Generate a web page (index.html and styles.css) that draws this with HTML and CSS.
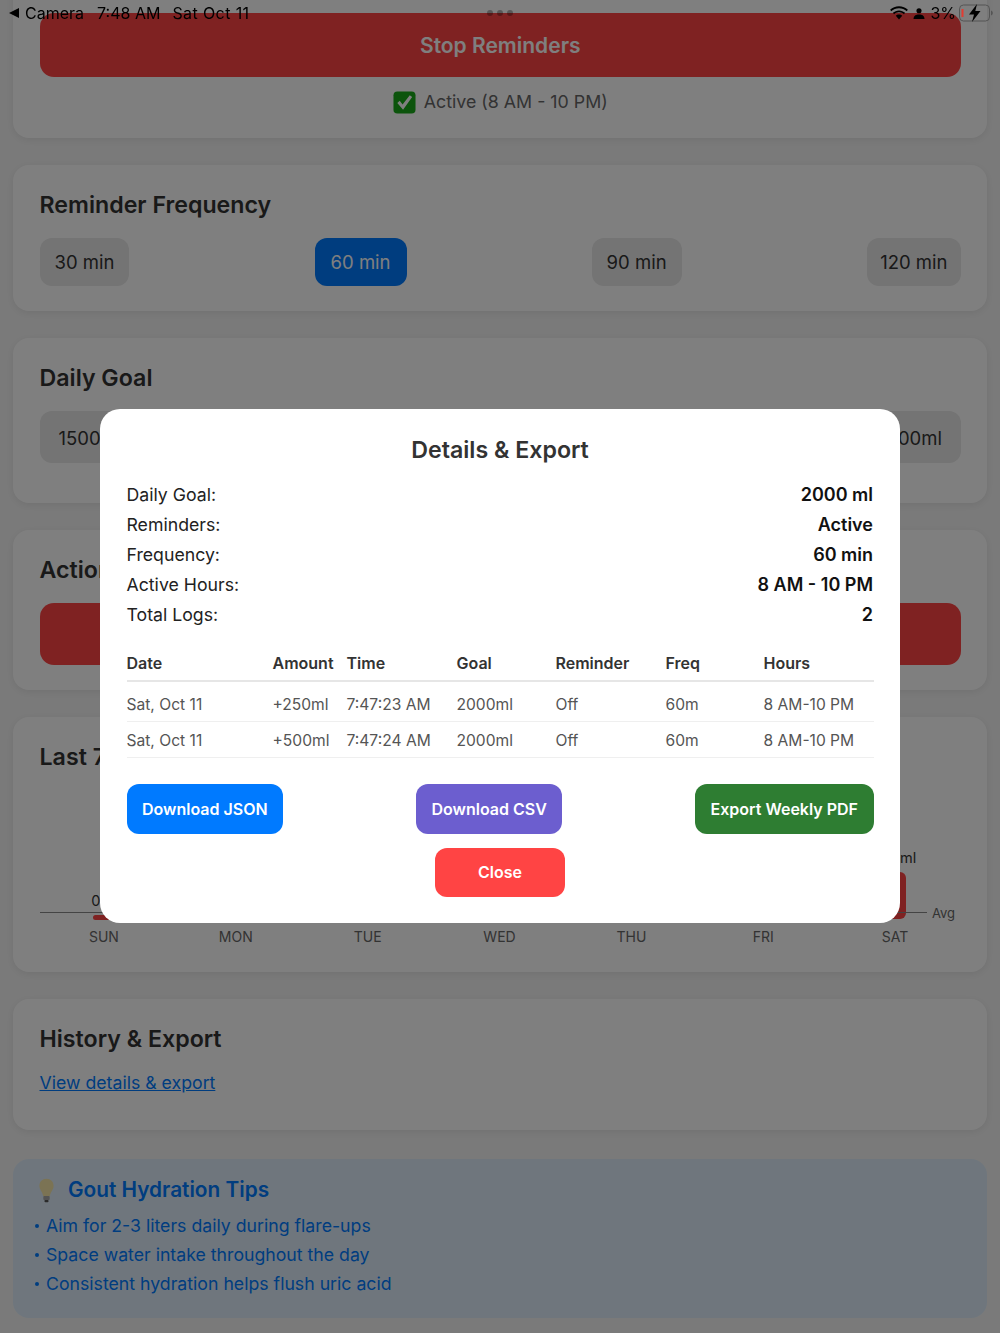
FILE: index.html
```html
<!DOCTYPE html>
<html lang="en">
<head>
<meta charset="utf-8">
<title>Hydration Reminders</title>
<link rel="stylesheet" href="styles.css">
</head>
<body>
<main class="page">
  <section class="card card-status">
    <button class="primary-btn stop-btn">Stop Reminders</button>
    <p class="status">
      <svg class="check" viewBox="0 0 24 24"><rect x="0.5" y="0.5" width="23" height="23" rx="4" fill="#18a818"/><path d="M4.500 12.500l2.500-2.200 3 3.700L17.500 4.500l2.500 1.800L10.500 19.500z" fill="#fff"/></svg>
      <span>Active (8 AM - 10 PM)</span>
    </p>
  </section>

  <section class="card card-freq">
    <h2>Reminder Frequency</h2>
    <div class="options">
      <button class="opt">30 min</button>
      <button class="opt opt-active">60 min</button>
      <button class="opt">90 min</button>
      <button class="opt opt-narrow">120 min</button>
    </div>
  </section>

  <section class="card card-goal">
    <h2>Daily Goal</h2>
    <div class="options">
      <button class="opt opt-tall">1500ml</button>
      <button class="opt opt-tall">2000ml</button>
      <button class="opt opt-tall">2500ml</button>
      <button class="opt opt-tall">3000ml</button>
    </div>
  </section>

  <section class="card card-actions">
    <h2>Actions</h2>
    <div class="primary-btn action-btn"></div>
  </section>

  <section class="card card-chart">
    <h2>Last 7 Days</h2>
    <div class="chart">
      <div class="avg-line"></div>
      <span class="avg-label">Avg</span>
      <div class="col"><span class="col-val">0ml</span><div class="bar bar-min"></div><span class="col-day">SUN</span></div>
      <div class="col"><div class="bar bar-none"></div><span class="col-day">MON</span></div>
      <div class="col"><div class="bar bar-none"></div><span class="col-day">TUE</span></div>
      <div class="col"><div class="bar bar-none"></div><span class="col-day">WED</span></div>
      <div class="col"><div class="bar bar-none"></div><span class="col-day">THU</span></div>
      <div class="col"><div class="bar bar-none"></div><span class="col-day">FRI</span></div>
      <div class="col"><span class="col-val">750ml</span><div class="bar bar-sat"></div><span class="col-day">SAT</span></div>
    </div>
  </section>

  <section class="card card-history">
    <h2>History &amp; Export</h2>
    <a class="link" href="#">View details &amp; export</a>
  </section>

  <section class="tips">
    <h3 class="tips-title">
      <svg class="bulb" viewBox="0 0 20 30"><path d="M10 1C5 1 1.500 4.800 1.500 9.500c0 4.400 3.400 6.600 4.600 12h7.800c1.200-5.400 4.600-7.600 4.600-12C18.500 4.800 15 1 10 1z" fill="#f6e6a8"/><rect x="6.200" y="21.500" width="7.600" height="5" rx="1" fill="#a9a9a9"/><rect x="7.500" y="26.500" width="5" height="2.500" rx="1" fill="#555"/></svg>
      <span>Gout Hydration Tips</span>
    </h3>
    <ul class="tips-list">
      <li>Aim for 2-3 liters daily during flare-ups</li>
      <li>Space water intake throughout the day</li>
      <li>Consistent hydration helps flush uric acid</li>
    </ul>
  </section>
</main>

<div class="scrim">
  <div class="modal">
    <h2 class="modal-title">Details &amp; Export</h2>
    <dl class="summary">
      <div class="summary-row"><dt>Daily Goal:</dt><dd>2000 ml</dd></div>
      <div class="summary-row"><dt>Reminders:</dt><dd>Active</dd></div>
      <div class="summary-row"><dt>Frequency:</dt><dd>60 min</dd></div>
      <div class="summary-row"><dt>Active Hours:</dt><dd>8 AM - 10 PM</dd></div>
      <div class="summary-row"><dt>Total Logs:</dt><dd>2</dd></div>
    </dl>
    <table class="logs">
      <colgroup>
        <col class="c-date"><col class="c-amount"><col class="c-time"><col class="c-goal"><col class="c-rem"><col class="c-freq"><col class="c-hours">
      </colgroup>
      <thead>
        <tr><th>Date</th><th>Amount</th><th>Time</th><th>Goal</th><th>Reminder</th><th>Freq</th><th>Hours</th></tr>
      </thead>
      <tbody>
        <tr><td>Sat, Oct 11</td><td>+250ml</td><td>7:47:23 AM</td><td>2000ml</td><td>Off</td><td>60m</td><td>8 AM-10 PM</td></tr>
        <tr><td>Sat, Oct 11</td><td>+500ml</td><td>7:47:24 AM</td><td>2000ml</td><td>Off</td><td>60m</td><td>8 AM-10 PM</td></tr>
      </tbody>
    </table>
    <div class="export-row">
      <button class="mbtn mbtn-json">Download JSON</button>
      <button class="mbtn mbtn-csv">Download CSV</button>
      <button class="mbtn mbtn-pdf">Export Weekly PDF</button>
    </div>
    <div class="close-row">
      <button class="mbtn mbtn-close">Close</button>
    </div>
  </div>
</div>

<div class="statusbar">
  <div class="sb-left">
    <svg class="sb-back" viewBox="0 0 10 10"><path d="M10 0v10L0 5z" fill="#000"/></svg>
    <span>Camera</span>
    <span class="sb-gap">7:48 AM</span>
    <span class="sb-gap sb-gap-date">Sat Oct 11</span>
  </div>
  <div class="sb-dots"><i></i><i></i><i></i></div>
  <div class="sb-right">
    <svg class="sb-wifi" viewBox="0 0 18 14"><path d="M9 2.200c3 0 5.700 1.100 7.700 3l1.200-1.400C15.500 1.500 12.400.2 9 .2S2.500 1.500.1 3.800l1.200 1.400c2-1.900 4.700-3 7.700-3z" fill="#000"/><path d="M9 6.300c1.900 0 3.600.7 4.900 1.900l1.200-1.400C13.500 5.300 11.400 4.400 9 4.400s-4.500.9-6.100 2.400l1.200 1.400C5.400 7 7.100 6.300 9 6.300z" fill="#000"/><path d="M9 8.500c-1.300 0-2.400.5-3.200 1.200L9 13.500l3.200-3.800C11.400 9 10.300 8.500 9 8.500z" fill="#000"/></svg>
    <svg class="sb-person" viewBox="0 0 12 12"><circle cx="6" cy="3" r="2.800" fill="#000"/><path d="M0 12c0-3.500 2.500-5 6-5s6 1.500 6 5z" fill="#000"/></svg>
    <span>3%</span>
    <svg class="sb-batt" viewBox="0 0 34 18"><rect x="0.500" y="1" width="30" height="16" rx="4" fill="none" stroke="#555" stroke-width="1"/><rect x="2.500" y="5" width="2" height="8" fill="#e33b30"/><path d="M32 6.500c1.200.4 1.800 1.300 1.800 2.500s-.6 2.100-1.800 2.500z" fill="#555"/><path d="M18 0L10 10.500h5L13 18l8.500-11h-5.200z" fill="#000"/></svg>
  </div>
</div>
</body>
</html>
```

FILE: styles.css
```css
* { box-sizing: border-box; }

html, body {
  margin: 0;
  padding: 0;
  height: 1333px;
  overflow: hidden;
  background: #f5f5f5;
  font-family: Inter, "Noto Sans", "Liberation Sans", sans-serif;
  color: #333;
}

.page {
  display: flex;
  flex-direction: column;
  margin-top: -30px;
  padding: 0 13px;
}

.card {
  background: #fff;
  border-radius: 16px;
  padding: 26px 26px 26px 26.500px;
  margin-bottom: 27px;
  box-shadow: 0 2px 8px rgba(0, 0, 0, 0.08);
}

.card h2 {
  margin: 0 0 18px;
  font-size: 23.200px;
  line-height: 29px;
  font-weight: 600;
  color: #333;
}

.card-status { height: 168px; padding-top: 43px; }

.primary-btn {
  display: block;
  width: 100%;
  border: 0;
  border-radius: 14px;
  background: #ff4444;
  color: #fff;
  font: 600 21px/24px Inter, "Liberation Sans", sans-serif;
}

.stop-btn { height: 64px; padding-top: 2px; }
.action-btn { height: 62px; }

.status {
  margin: 13px 0 0;
  display: flex;
  justify-content: center;
  align-items: center;
  gap: 8px;
  font-size: 17.800px;
  line-height: 24px;
  color: #666;
}

.check { width: 23px; height: 23px; display: block; }

.options {
  display: flex;
  justify-content: space-between;
  margin-top: 1px;
}

.opt {
  height: 48px;
  padding: 0 15px;
  border: 0;
  border-radius: 12px;
  background: #e8e8e8;
  color: #333;
  font: 400 18.500px/24px Inter, "Liberation Sans", sans-serif;
}

.opt-narrow { padding: 0 13.500px; }
.opt-tall { height: 52px; padding: 1px 19px 0; }
.opt-active { background: #007aff; color: #fff; padding: 0 16px; }

.card-freq { height: 146px; }
.card-goal { height: 165px; }
.card-actions { height: 160px; }
.card-chart { height: 255px; }
.card-history { height: 131px; margin-bottom: 29px; }

.chart {
  position: relative;
  display: flex;
  align-items: flex-end;
  margin: 0 0 0 -1.500px;
  height: 155px;
}

.col {
  flex: 1 1 0;
  display: flex;
  flex-direction: column;
  align-items: center;
}

.col-val {
  font-size: 14.500px;
  line-height: 17px;
  color: #333;
  margin-bottom: 6px;
}

.bar {
  width: 21px;
  background: #ff4444;
  border-radius: 6px;
}

.bar-none { height: 0; }
.bar-min { height: 5px; margin-bottom: -1px; }
.bar-sat { height: 47px; }

.col-day {
  margin-top: 9px;
  font-size: 14px;
  line-height: 17px;
  color: #666;
}

.avg-line {
  position: absolute;
  left: 1.500px;
  right: 34px;
  top: 122px;
  border-top: 1px solid #888;
}

.avg-label {
  position: absolute;
  right: 6px;
  top: 115px;
  font-size: 13px;
  line-height: 16px;
  color: #666;
}

.link {
  display: block;
  margin-top: -1px;
  font-size: 17.700px;
  line-height: 24px;
  color: #007aff;
}

.tips {
  height: 159px;
  padding: 17px 21px 0 25px;
  border-radius: 16px;
  background: #deedfb;
}

.tips-title {
  display: flex;
  align-items: center;
  gap: 13px;
  margin: 0 0 7px;
  font-size: 20.800px;
  line-height: 28px;
  font-weight: 600;
  color: #007aff;
}

.bulb { width: 17px; height: 25px; display: block; }

.tips-list {
  list-style: none;
  margin: 0 0 0 -3px;
  padding: 0;
  color: #007aff;
  font-size: 17.700px;
  line-height: 29px;
}

.tips-list li {
  display: flex;
  align-items: center;
}

.tips-list li::before {
  content: "";
  width: 4px;
  height: 4px;
  border-radius: 50%;
  background: currentColor;
  margin-right: 7px;
  flex: none;
}

.scrim {
  position: fixed;
  inset: 0;
  background: rgba(0, 0, 0, 0.5);
  display: flex;
  align-items: center;
  justify-content: center;
}

.modal {
  width: 800px;
  height: 514px;
  margin-bottom: 1px;
  padding: 26px 26.500px;
  border-radius: 20px;
  background: #fff;
}

.modal-title {
  margin: 0 0 15px;
  text-align: center;
  font-size: 23.200px;
  line-height: 30px;
  font-weight: 600;
  color: #333;
}

.summary { margin: 0 0 23px; }

.summary-row {
  display: flex;
  justify-content: space-between;
  font-size: 17.700px;
  line-height: 30px;
  color: #222;
}

.summary-row dt { font-weight: 400; }
.summary-row dd { margin: 0 0.500px 0 0; font-size: 18px; font-weight: 600; color: #111; }

.logs {
  width: 100%;
  table-layout: fixed;
  border-collapse: collapse;
  font-size: 15.600px;
}

.c-date { width: 146px; }
.c-amount { width: 74px; }
.c-time { width: 110px; }
.c-goal { width: 99px; }
.c-rem { width: 110px; }
.c-freq { width: 98px; }

.logs th {
  padding: 0 0 7px;
  text-align: left;
  font-size: 16px;
  font-weight: 600;
  color: #333;
  line-height: 20px;
  border-bottom: 2px solid #e6e6e6;
}

.logs td {
  height: 36px;
  padding: 2px 0 0;
  color: #555;
  border-bottom: 1px solid #efefef;
  white-space: nowrap;
}

.logs tbody tr:first-child td { height: 40px; padding-top: 6px; }

.export-row {
  display: flex;
  justify-content: space-between;
  margin-top: 26px;
}

.close-row {
  display: flex;
  justify-content: center;
  margin-top: 14px;
}

.mbtn {
  height: 50px;
  padding: 0 15.500px;
  border: 0;
  border-radius: 12px;
  color: #fff;
  font: 600 16px/20px Inter, "Liberation Sans", sans-serif;
}

.mbtn-json { background: #007aff; }
.mbtn-csv { background: #6c5ecf; }
.mbtn-pdf { background: #2e7d32; }
.mbtn-close { background: #ff4444; width: 130px; height: 49px; }

.statusbar {
  position: fixed;
  top: 0;
  left: 0;
  right: 0;
  height: 26px;
  font-size: 16px;
  line-height: 26px;
  color: #000;
}

.sb-left {
  position: absolute;
  left: 9px;
  top: 0;
  display: flex;
  align-items: center;
  height: 26px;
}

.sb-back { width: 10px; height: 10px; margin-right: 6px; }
.sb-gap { margin-left: 13px; }
.sb-gap-date { margin-left: 12px; letter-spacing: 0.4px; }

.sb-dots {
  position: absolute;
  top: 10px;
  left: 487px;
  display: flex;
  gap: 4px;
}

.sb-dots i {
  width: 6px;
  height: 6px;
  border-radius: 50%;
  background: rgba(0, 0, 0, 0.3);
  display: block;
}

.sb-right {
  position: absolute;
  right: 7px;
  top: 0;
  height: 26px;
  display: flex;
  align-items: center;
  gap: 6px;
}

.sb-wifi { width: 18px; height: 14px; margin-right: -1px; }
.sb-person { width: 12px; height: 11px; margin-right: -1px; }
.sb-batt { width: 34px; height: 18px; margin-left: -3px; }
```
